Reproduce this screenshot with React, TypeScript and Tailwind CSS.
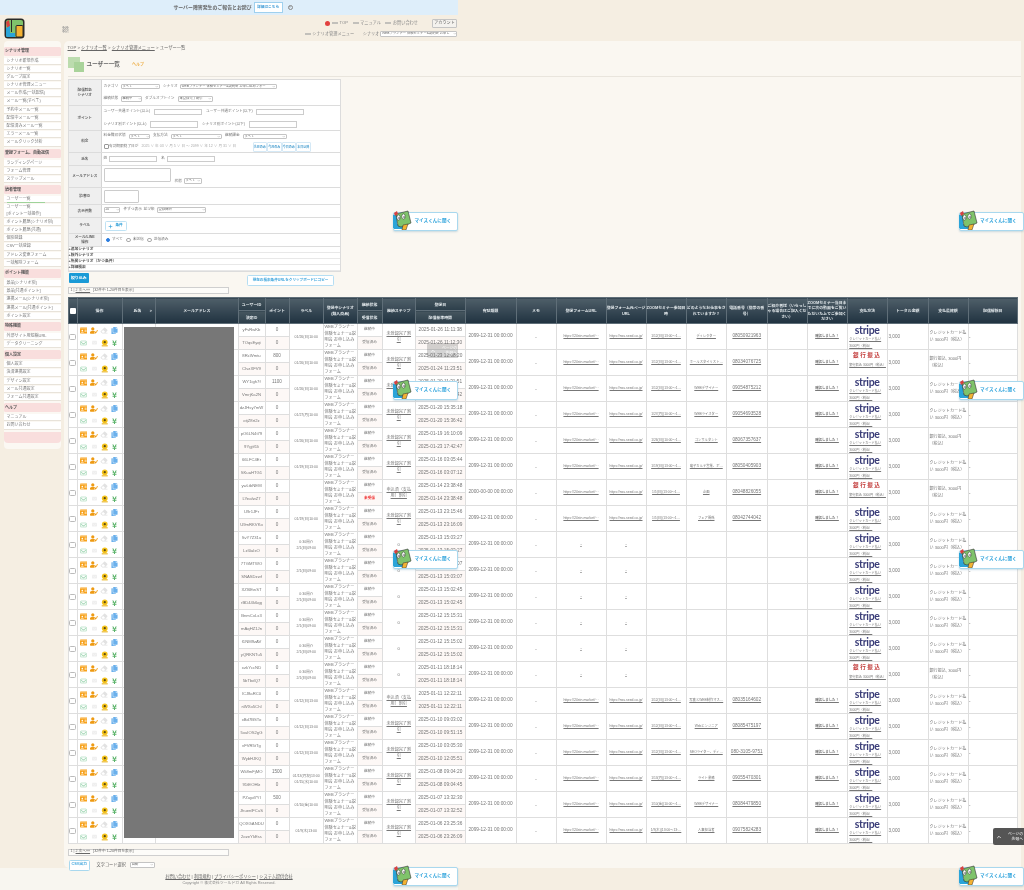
import { ReactNode } from "react";
import { FaCopy, FaEnvelope, FaEraser, FaIdCard, FaRegEnvelope, FaUserEdit, FaYenSign } from "react-icons/fa";
import { ChevronDown, ChevronUp, Plus, QrCode } from "lucide-react";

type Member = {
  uid: string;
  sid: string;
  p1: string;
  label: string[];
  step: string;
  d1: string;
  d2: string;
  job?: string;
  tel?: string;
  zoom?: string;
  bank?: boolean;
  payBank?: boolean;
  exp?: string;
  unread?: boolean;
};

const members: Member[] = [
  { uid: "yFvRwKb", sid: "TOqsEyqt", p1: "0", label: ["01/26(日)10:00"], step: "未登録完了割引", d1: "2025-01-26 11:11:38", d2: "2025-01-26 11:12:30", job: "ディレクター", tel: "08050921963", zoom: "1/12(日)(13:00〜1…" },
  { uid: "8RcWmtu", sid: "CIvzXFV9", p1: "800", label: ["01/26(日)10:00"], step: "未登録完了割引", d1: "2025-01-23 12:08:20", d2: "2025-01-24 11:23:51", job: "ホールスタイリスト…", tel: "08034076725", zoom: "1/12(日)(13:00〜1…", bank: true, payBank: true },
  { uid: "WY1igh7f", sid: "VmrjKa2N", p1: "1100", label: ["01/26(日)10:00"], step: "未登録完了割引", d1: "2025-01-20 11:31:51", d2: "2025-01-20 11:32:42", job: "WEBデザイナー", tel: "09054875212", zoom: "1/12(日)(13:00〜1…" },
  { uid: "dzJHsy7mW", sid: "otjZ8rt2z", p1: "0", label: ["01/27(月)10:00"], step: "未登録完了割引", d1: "2025-01-20 15:35:18", d2: "2025-01-20 15:36:42", job: "WEBライスター", tel: "09054693528", zoom: "1/27(月)(10:00〜1…" },
  { uid: "pO6LN4t79", sid: "9Ygjtf1li", p1: "0", label: ["01/26(日)10:00"], step: "未登録完了割引", d1: "2025-01-19 16:10:09", d2: "2025-01-23 17:42:47", job: "コンサルタント", tel: "08067357637", zoom: "1/26(日)(10:00〜1…", payBank: true },
  { uid: "66LFC4Er", sid: "SKuaHTG1", p1: "0", label: ["01/19(日)13:00"], step: "未登録完了割引", d1: "2025-01-16 03:05:44", d2: "2025-01-16 03:07:12", job: "電子カルテ営業、ボ…", tel: "08050405903", zoom: "1/19(日)(13:00〜1…" },
  { uid: "ywLtbNEM", sid: "LYeafwZ7", p1: "0", label: [], step: "申込済（支払用）割引", d1: "2025-01-14 23:38:48", d2: "2025-01-14 23:38:48", job: "企画", tel: "08048826055", zoom: "1/5(日)(13:00〜1…", bank: true, payBank: true, exp: "2000-00-00 00:00:00", unread: true },
  { uid: "U9r1JFr", sid: "U9mRKVKo", p1: "0", label: ["01/19(日)10:00"], step: "未登録完了割引", d1: "2025-01-13 23:15:46", d2: "2025-01-13 23:16:09", job: "フェア関係", tel: "08042744042", zoom: "1/5(日)(13:00〜1…" },
  { uid: "SvY7Z31u", sid: "LzI0aIxO", p1: "0", label: ["0:30開介", "2/1(日)09:00"], step: "0", d1: "2025-01-13 15:03:27", d2: "2025-01-13 15:03:27" },
  { uid: "7TGMTWO", sid: "SNASDzwf", p1: "0", label: ["2/1(日)09:00"], step: "0", d1: "2025-01-13 15:03:07", d2: "2025-01-13 15:03:07" },
  { uid: "XZI6EwST", sid: "rBD44k6qg", p1: "0", label: ["0:30開介", "2/1(日)09:00"], step: "0", d1: "2025-01-13 15:02:45", d2: "2025-01-13 15:02:45" },
  { uid: "BnmCxLx3", sid: "mAqHZ1Jn", p1: "0", label: ["0:30開介", "2/1(日)09:00"], step: "0", d1: "2025-01-12 15:15:31", d2: "2025-01-12 15:15:31" },
  { uid: "f1NM9zAV", sid: "yQRKNTu5", p1: "0", label: ["0:30開介", "2/1(日)09:00"], step: "0", d1: "2025-01-12 15:15:02", d2: "2025-01-12 15:15:02" },
  { uid: "xzkYccND", sid: "5bTbdQ7", p1: "0", label: ["0:30開介", "2/1(日)09:00"], step: "0", d1: "2025-01-11 18:18:14", d2: "2025-01-11 18:18:14", bank: true, payBank: true },
  { uid: "lCJ8aRC0", sid: "nWXo5ChI", p1: "0", label: ["01/12(日)13:00"], step: "申込済（支払用）割引", d1: "2025-01-11 12:22:11", d2: "2025-01-11 12:22:11", job: "写真とWEB制作マス…", tel: "08035164602", zoom: "1/12(日)(13:00〜1…" },
  { uid: "xBd7BSTo", sid: "5xuIOS2gG", p1: "0", label: ["01/12(日)13:00"], step: "未登録完了割引", d1: "2025-01-10 09:03:02", d2: "2025-01-10 09:51:15", job: "Webエンジニア", tel: "08085475197", zoom: "1/12(日)(13:00〜1…" },
  { uid: "vFVR5tTg", sid: "WybHJKQ", p1: "0", label: ["01/12(日)13:00"], step: "未登録完了割引", d1: "2025-01-10 03:05:30", d2: "2025-01-10 12:05:51", job: "SEOライター、ディ…", tel: "080-3105-9751", zoom: "1/12(日)(13:00〜1…" },
  { uid: "Wk8mFjMO", sid: "91tEOHlz", p1: "1500", label: ["01/13(月祝)13:00", "01/15(水)10:00"], step: "未登録完了割引", d1: "2025-01-08 09:04:20", d2: "2025-01-08 09:04:45", job: "ライト業務", tel: "09055470301", zoom: "1/13(月)(13:00〜1…" },
  { uid: "PZuyd7Yl", sid: "JhuenlFCuS", p1: "500", label: ["01/10(金)10:00"], step: "未登録完了割引", d1: "2025-01-07 13:32:30", d2: "2025-01-07 13:32:52", job: "WEBデザイナー", tel: "08084479850", zoom: "1/10(金)(10:00〜1…" },
  { uid: "QOXGANDU", sid: "2ozeYkEss", p1: "0", label: ["01/9(木)13:00"], step: "未登録完了割引", d1: "2025-01-06 23:25:36", d2: "2025-01-06 23:26:09", job: "人事担当者", tel: "09075824283", zoom: "1/9(木)(13:00〜13:…" },
];

const sideNav: { title: string; items: string[][] }[] = [
  { title: "シナリオ管理", items: [["シナリオ新規作成"], ["シナリオ一覧"], ["グループ設定"], ["シナリオ管理メニュー"], ["メール作成(一括配信)"], ["メール一覧(すべて)"], ["予約中メール一覧"], ["配信中メール一覧"], ["配信済みメール一覧"], ["エラーメール一覧"], ["メールクリック分析"]] },
  { title: "登録フォーム、自動返信", items: [["ランディングページ"], ["フォーム管理"], ["ステップメール"]] },
  { title: "読者管理", items: [["ユーザー一覧"], ["ユーザー一覧", "[ポイント一括操作]"], ["ポイント履歴(シナリオ別)"], ["ポイント履歴(共通)"], ["個別登録"], ["CSV一括登録"], ["アドレス変更フォーム"], ["一括解除フォーム"]] },
  { title: "ポイント機能", items: [["景品[シナリオ別]"], ["景品[共通ポイント]"], ["連携メール[シナリオ別]"], ["連携メール[共通ポイント]"], ["ポイント設定"]] },
  { title: "特殊機能", items: [["外部サイト用短縮URL"], ["データクリーニング"]] },
  { title: "個人設定", items: [["個人設定"], ["決済連携設定"], ["デザイン設定"], ["メール共通設定"], ["フォーム共通設定"]] },
  { title: "ヘルプ", items: [["マニュアル"], ["お問い合わせ"]] },
];

const Sel = ({ className, children }: { className: string; children?: ReactNode }) => (
  <div className={`flex h-[5.5px] items-center justify-between overflow-hidden rounded-[1px] border border-[#c4c4c4] bg-white pl-[1px] text-[3.3px] leading-none text-[#666] ${className}`}>
    <span className="whitespace-nowrap">{children}</span>
    <ChevronDown className="h-[3.5px] w-[3.5px] shrink-0 text-[#777]" strokeWidth={2} />
  </div>
);

const Inp = ({ className }: { className: string }) => (
  <div className={`border border-[#cccccc] bg-white ${className}`} />
);

const FormRow = ({ label, className, children }: { label: ReactNode; className: string; children: ReactNode }) => (
  <div className={`flex border-b border-[#dcdcdc] ${className}`}>
    <div className="flex w-[33.5px] shrink-0 items-center justify-center border-r border-[#d4d4d4] bg-[#efefef] text-center text-[3.6px] font-bold leading-[5px] text-[#666]">
      {label}
    </div>
    <div className="min-w-0 flex-1 whitespace-nowrap bg-white pl-[1.5px]">{children}</div>
  </div>
);

const DayBtn = ({ children }: { children: string }) => (
  <div className="flex h-[10px] w-[14.5px] items-center justify-center whitespace-nowrap rounded-[1px] border border-[#d5e9f6] bg-white text-[3px] font-bold text-[#4a9fd0]">
    {children}
  </div>
);

const Radio = ({ on, children }: { on?: boolean; children: string }) => (
  <div className="flex items-center gap-[2px] text-[3.7px]">
    <span className={`h-[4.5px] w-[4.5px] rounded-full ${on ? "border border-[#2b7de0] bg-[#2b7de0]" : "border border-[#aaa] bg-white"}`} />
    {children}
  </div>
);

const Mascot = ({ className }: { className: string }) => (
  <div className={`absolute flex h-[18.5px] w-[65px] items-center rounded-[2px] border border-[#a9d8ee] bg-white shadow-[0_1px_2px_rgba(90,150,180,.3)] ${className}`}>
    <svg viewBox="0 0 20 20" className="-mt-[2px] -ml-[1px] h-[20px] w-[20px] shrink-0">
      <path d="M0 5 L4 4 L4 19 L0 18 Z" fill="#2aa4d8" />
      <path d="M1 19 L1 14 L14 14 L13 19 Z" fill="#2aa4d8" />
      <path d="M3 4 L15 1 L18 13 L11 16 L8 17 L5 16 Z" fill="#7fc36b" stroke="#333" strokeWidth="0.6" />
      <path d="M10 15 L15 14 L13 20 L9 20 Z" fill="#f4b233" stroke="#333" strokeWidth="0.5" />
      <path d="M1 3 L4 1 L5 4 L2 6 Z" fill="#d9403f" />
      <ellipse cx="5.5" cy="7.5" rx="1.7" ry="2.6" fill="#fff" stroke="#333" strokeWidth="0.5" />
      <ellipse cx="10.5" cy="6.5" rx="1.7" ry="2.6" fill="#fff" stroke="#333" strokeWidth="0.5" />
      <circle cx="6" cy="8" r="0.7" fill="#222" />
      <circle cx="11" cy="7" r="0.7" fill="#222" />
    </svg>
    <span className="ml-[1.5px] whitespace-nowrap text-[4.6px] font-bold text-[#2ea3dc]">マイスくんに聞く</span>
  </div>
);

const Pager = () => (
  <div className="flex h-[6.8px] w-[161px] items-center border border-[#cfcfcf] bg-[#fdfcf9] pl-[2px] text-[3.7px] text-[#666]">
    1 | <span className="ml-[1px] underline">2 次へ»»</span>
    <span className="ml-[3px]">[32件中 1-20件目を表示]</span>
  </div>
);

const Sidebar = () => (
  <aside className="ml-[3.5px] h-[408px] w-[57.5px] shrink-0 rounded-[4px] bg-[#fbf8f3] pt-[5.5px] text-[4px] text-[#777]">
    {sideNav.map((section) => (
      <div key={section.title} className="mb-[2px]">
        <div className="mb-[2px] flex h-[9px] items-center rounded-[1.5px] bg-[#f9dedd] pl-[1.5px] text-[4px] font-bold text-[#555]">
          {section.title}
        </div>
        {section.items.map((item, i) => {
          const active = section.title === "読者管理" && i === 0;
          return (
            <div
              key={item.join("")}
              className={`mb-[1px] whitespace-nowrap border-b border-[#e8e3da] bg-white pl-[3px] leading-[6.2px] ${item.length > 1 ? "h-[13.5px]" : "h-[7.2px]"}`}
            >
              {item.map((t) => (
                <div key={t} className={active ? "w-[38px] border-b border-[#9ed39a]" : ""}>{t}</div>
              ))}
            </div>
          );
        })}
      </div>
    ))}
    <div className="mt-[2px] h-[11px] rounded-b-[4px] bg-[#f9dedd]" />
  </aside>
);

const SearchForm = () => (
  <div className="mt-[2px] w-[273.5px] border border-[#dcdcdc] text-[3.7px] text-[#777]">
    <FormRow label={<>配信対象<br />シナリオ</>} className="h-[26px]">
      <div className="flex h-[13px] items-center">
        <span className="w-[17px]">カテゴリ</span>
        <Sel className="w-[39px]">すべて</Sel>
        <span className="ml-[3.5px] w-[16.5px]">シナリオ</span>
        <Sel className="w-[97px]">WEBプランナー 体験セミナー&amp;説明会 お申し込みフォー</Sel>
      </div>
      <div className="flex h-[12px] items-center">
        <span className="w-[17px]">継続状態</span>
        <Sel className="w-[21.5px]">継続中</Sel>
        <span className="ml-[3px] w-[32.5px]">ダブルオプトイン</span>
        <Sel className="w-[35px]">未登録完了割引</Sel>
      </div>
    </FormRow>
    <FormRow label="ポイント" className="h-[25px]">
      <div className="flex h-[12.5px] items-center">
        <span className="w-[50.5px]">ユーザー共通ポイント(以上)</span>
        <Inp className="h-[6px] w-[48px]" />
        <span className="ml-[4px] w-[50px]">ユーザー共通ポイント(以下)</span>
        <Inp className="h-[6px] w-[48px]" />
      </div>
      <div className="flex h-[12px] items-center">
        <span className="w-[46.5px]">シナリオ別ポイント(以上)</span>
        <Inp className="h-[6.5px] w-[48px]" />
        <span className="ml-[4px] w-[46.5px]">シナリオ別ポイント(以下)</span>
        <Inp className="h-[6.5px] w-[48px]" />
      </div>
    </FormRow>
    <FormRow label="料金" className="h-[22px]">
      <div className="flex h-[10.5px] items-center">
        <span className="w-[25px]">料金徴収状態</span>
        <Sel className="w-[21.5px]">すべて</Sel>
        <span className="ml-[3px] w-[17.5px]">支払方法</span>
        <Sel className="w-[51px]">すべて</Sel>
        <span className="ml-[3.5px] w-[17.5px]">継続課金</span>
        <Sel className="w-[44px]">すべて</Sel>
      </div>
      <div className="flex h-[10.5px] items-center">
        <span className="h-[5px] w-[5px] rounded-[1px] border border-[#999] bg-white" />
        <span className="ml-[0.5px] w-[32.5px]">有効期限終了日が</span>
        <span className="w-[111px] text-[3.6px] text-[#aaa]">2025 ∨ 年 03 ∨ 月 5 ∨ 日 ～ 2099 ∨ 年 12 ∨ 月 31 ∨ 日</span>
        <DayBtn>先月のみ</DayBtn>
        <DayBtn>今月のみ</DayBtn>
        <DayBtn>今日のみ</DayBtn>
        <DayBtn>本日以降</DayBtn>
      </div>
    </FormRow>
    <FormRow label="氏名" className="h-[13px]">
      <div className="flex h-full items-center">
        <span className="w-[5.5px]">姓</span>
        <Inp className="h-[6.5px] w-[48px]" />
        <span className="ml-[4px] w-[5.5px]">名</span>
        <Inp className="h-[6.5px] w-[48px]" />
      </div>
    </FormRow>
    <FormRow label="メールアドレス" className="h-[22px]">
      <div className="flex h-full items-start pt-[2px]">
        <Inp className="h-[13.5px] w-[67.5px] rounded-[1px]" />
        <span className="ml-[3.5px] mt-[11px] w-[9px]">状態</span>
        <Sel className="mt-[10px] w-[18px]">すべて</Sel>
      </div>
    </FormRow>
    <FormRow label="読者ID" className="h-[17px]">
      <div className="pt-[2px]">
        <Inp className="h-[13px] w-[35px] rounded-[1px]" />
      </div>
    </FormRow>
    <FormRow label="表示件数" className="h-[13px]">
      <div className="flex items-center pt-[2px]">
        <Sel className="w-[16.5px]">20</Sel>
        <span className="ml-[3.5px] w-[20px]">件ずつ表示</span>
        <span className="w-[13px]">並び順</span>
        <Sel className="w-[49.5px]">登録降順</Sel>
      </div>
    </FormRow>
    <FormRow label="ラベル" className="h-[16px]">
      <div className="pl-[1px] pt-[3px]">
        <div className="flex h-[10px] w-[22px] items-center justify-center gap-[2px] rounded-[1.5px] border border-[#bfe2f4] bg-white text-[3.6px] font-bold text-[#2f9fd8]">
          <Plus className="h-[5px] w-[5px]" strokeWidth={3} />
          条件
        </div>
      </div>
    </FormRow>
    <FormRow label={<>メール/LINE<br />操作</>} className="h-[13px]">
      <div className="flex h-full items-center gap-[3.5px] pl-[2px]">
        <Radio on>すべて</Radio>
        <Radio>未送信</Radio>
        <Radio>送信済み</Radio>
      </div>
    </FormRow>
    {["+追加シナリオ", "+除外シナリオ", "+所属シナリオ（かつ条件）", "+詳細検索"].map((t) => (
      <div key={t} className="flex h-[6px] items-center border-b border-[#e8e8e8] bg-white text-[3.8px] font-bold leading-none text-[#555]">
        {t}
      </div>
    ))}
  </div>
);

const Th = ({ children, rowSpan = 2, sub }: { children?: ReactNode; rowSpan?: number; sub?: boolean }) => (
  <th
    rowSpan={rowSpan}
    className={`border border-[#5f6e78] p-0 text-center text-[3.9px] font-bold leading-[5.4px] text-[#e3e9ec] ${sub ? "bg-gradient-to-b from-[#46565f] to-[#2c3e4a]" : "bg-gradient-to-b from-[#4f5f69] to-[#203240]"}`}
  >
    {children}
  </th>
);

const ActionIcons = () => (
  <div className="grid h-[25px] grid-cols-4 items-center justify-items-center pl-[1px] pr-[1.5px]">
    <FaIdCard className="h-[7px] w-[7.5px] text-[#f7a21c]" />
    <FaUserEdit className="h-[7px] w-[8px] text-[#ee9a12]" />
    <FaEraser className="h-[7px] w-[8px] text-[#e2e2e2]" />
    <FaCopy className="h-[7px] w-[7px] text-[#6ab0ec]" />
    <FaRegEnvelope className="h-[6px] w-[7px] text-[#8fcfa6]" />
    <FaEnvelope className="h-[5px] w-[7px] text-[#efefef]" />
    <svg viewBox="0 0 10 10" className="h-[7.5px] w-[7.5px]">
      <circle cx="5" cy="4.3" r="3.8" fill="#f4c21a" />
      <circle cx="5" cy="4.3" r="1.5" fill="#5b4a10" />
      <rect x="1" y="8.4" width="8" height="1.4" fill="#e8b010" />
    </svg>
    <FaYenSign className="h-[6.5px] w-[5px] text-[#5bb36a]" />
  </div>
);

const Cell = ({ rowSpan = 2, className = "", children }: { rowSpan?: number; className?: string; children?: ReactNode }) => (
  <td rowSpan={rowSpan} className={`overflow-hidden border border-[#dedede] p-0 text-center ${className}`}>
    {children}
  </td>
);

const MemberRows = ({ m }: { m: Member }) => {
  const hasForm = !!m.tel;
  return (
    <>
      <tr className="h-[12.85px]">
        <Cell>
          <span className="mx-auto block h-[6.5px] w-[6.5px] rounded-[1.5px] border border-[#bbb] bg-white" />
        </Cell>
        <Cell><ActionIcons /></Cell>
        <Cell />
        <Cell />
        <Cell rowSpan={1} className="text-[4.2px]">{m.uid}</Cell>
        <Cell rowSpan={1} className="text-[4.6px]">{m.p1}</Cell>
        <Cell className="text-[3.5px] leading-[6px]">
          {m.label.map((l) => (
            <div key={l}>{l}</div>
          ))}
        </Cell>
        <Cell className="text-left text-[4.1px] leading-[6.2px]">
          <div className="h-[24.8px] overflow-hidden pl-[0.5px]">WEBプランナー体験セミナー&amp;説明会 お申し込みフォーム</div>
        </Cell>
        <Cell rowSpan={1} className="text-[3.7px]">継続中</Cell>
        <Cell className="text-[4.1px] leading-[6.2px]">
          {m.step === "0" ? "0" : <span className="mx-auto block w-[27px] underline">{m.step}</span>}
        </Cell>
        <Cell rowSpan={1} className="whitespace-nowrap text-[4.75px]">{m.d1}</Cell>
        <Cell className="whitespace-nowrap text-[4.75px]">{m.exp ?? "2099-12-31 00:00:00"}</Cell>
        <Cell>-</Cell>
        <Cell className="text-[3.5px] underline">{hasForm ? <div className="whitespace-nowrap">https://24stn.market/···</div> : "-"}</Cell>
        <Cell className="text-[3.4px] underline">{hasForm ? <div className="whitespace-nowrap">https://nsu.seed.co.jp/</div> : "-"}</Cell>
        <Cell className="text-[3.3px] underline">{m.zoom && <div className="whitespace-nowrap">{m.zoom}</div>}</Cell>
        <Cell className="text-[3.3px] underline">{m.job && <div className="whitespace-nowrap">{m.job}</div>}</Cell>
        <Cell className="text-[4.7px] underline">{m.tel}</Cell>
        <Cell />
        <Cell className="text-[3.4px] font-bold underline">{hasForm && "確認しました！"}</Cell>
        <Cell>
          <div className="flex h-[25px] flex-col items-center overflow-hidden">
            {m.bank ? (
              <div className="mt-[1px] h-[10.5px] whitespace-nowrap text-[5.6px] font-bold leading-[9px] tracking-[1.5px] text-[#c4403f]">銀行振込</div>
            ) : (
              <div className="mt-[1px] h-[11px] font-['Lato',sans-serif] text-[10.5px] font-bold leading-[10px] tracking-[-0.3px] text-[#3a3d78]">stripe</div>
            )}
            <div className="w-[36px] text-left text-[3.2px] leading-[6.2px] underline">
              {m.bank ? <span className="whitespace-nowrap">銀行振込 3000円（税込）</span> : <>クレジットカード払い<br />3000円（税込）</>}
            </div>
          </div>
        </Cell>
        <Cell className="pl-[0.5px] text-left text-[4.6px]">3,000</Cell>
        <Cell className="text-left text-[4.1px] leading-[6.4px]">
          <div className="pl-[1px]">{m.payBank ? "銀行振込, 3000円（税込）" : "クレジットカード払い 3000円（税込）"}</div>
        </Cell>
        <Cell className="pl-[0.5px] text-left">-</Cell>
      </tr>
      <tr className="h-[12.85px] bg-[#fdf8f6]">
        <Cell rowSpan={1} className="bg-[#fdf8f6] text-[4.2px]">{m.sid}</Cell>
        <Cell rowSpan={1} className="bg-[#fdf8f6] text-[4.6px]">0</Cell>
        <Cell rowSpan={1} className={`bg-[#fdf8f6] text-[3.7px] ${m.unread ? "font-bold text-[#f03a3a]" : ""}`}>
          {m.unread ? "未受信" : "受信済み"}
        </Cell>
        <Cell rowSpan={1} className="whitespace-nowrap bg-[#fdf8f6] text-[4.75px]">{m.d2}</Cell>
      </tr>
    </>
  );
};

const UsersTable = () => (
  <div className="relative mt-[3.5px]">
    <table className="w-[949.5px] table-fixed border-collapse bg-white text-[4.4px] leading-none text-[#777]">
      <colgroup>
        {[9, 45, 33.5, 82.5, 27, 24, 34.5, 33.5, 25, 33.5, 49.5, 51, 40, 50, 40, 40, 40.5, 40.5, 40, 40, 40.5, 40.5, 40, 49.5].map((w, i) => (
          <col key={i} style={{ width: w }} />
        ))}
      </colgroup>
      <thead>
        <tr className="h-[13px]">
          <Th><span className="mx-auto block h-[6px] w-[6px] rounded-[1px] bg-white" /></Th>
          <Th>操作</Th>
          <Th>
            <div className="flex justify-between px-[3px]">
              <span className="ml-[8px]">氏名</span>
              <span>&gt;</span>
            </div>
          </Th>
          <Th>メールアドレス</Th>
          <Th rowSpan={1} sub>ユーザーID</Th>
          <Th>ポイント</Th>
          <Th>ラベル</Th>
          <Th>登録中シナリオ<br />(購入商品)</Th>
          <Th rowSpan={1} sub>継続状態</Th>
          <Th>継続ステップ</Th>
          <Th rowSpan={1} sub>登録日</Th>
          <Th>有効期限</Th>
          <Th>メモ</Th>
          <Th>登録フォームURL</Th>
          <Th>登録フォーム元ページURL</Th>
          <Th>ZOOMセミナー参加日時</Th>
          <Th>どのようなお仕事をされていますか？</Th>
          <Th>電話番号（携帯の番号）</Th>
          <Th>ご紹介者様（いらっしゃる場合はご記入ください）</Th>
          <Th>ZOOMセミナー当日までに次の動画をご覧いただいた上でご参加ください</Th>
          <Th>支払方法</Th>
          <Th>トータル金額</Th>
          <Th>支払最終額</Th>
          <Th>配信解除日</Th>
        </tr>
        <tr className="h-[13px]">
          <Th rowSpan={1} sub>決定ID</Th>
          <Th rowSpan={1} sub>受信状態</Th>
          <Th rowSpan={1} sub>配信基準時間</Th>
        </tr>
      </thead>
      <tbody>
        {members.map((m) => (
          <MemberRows key={m.uid} m={m} />
        ))}
      </tbody>
    </table>
    {/* 個人情報はグレーで隠されている */}
    <div className="absolute left-[56.5px] top-[29.5px] h-[511px] w-[110px] bg-[#777]" />
  </div>
);

const HeadLink = ({ children }: { children: string }) => (
  <span className="flex items-center">
    <span className="mr-[1.5px] h-[2.5px] w-[6px] bg-[#c2c0bb]" />
    {children}
  </span>
);

export default function App() {
  return (
    <div className="relative h-[890px] w-[1024px] overflow-hidden bg-[#f5eee2] font-['Liberation_Sans','Noto_Sans_CJK_JP',sans-serif] text-[#666] blur-[0.3px]">
      <div className="flex h-[15px] w-[458px] items-center justify-center bg-[#deeefa]">
        <span className="ml-[8px] text-[4.9px] font-bold text-[#666]">サーバー障害発生のご報告とお詫び</span>
        <div className="ml-[2px] flex h-[11px] w-[29px] items-center justify-center border border-[#9fd0ee] bg-white text-[3.7px] font-bold text-[#3f9bd6]">詳細はこちら</div>
        <span className="ml-[5px] flex h-[5px] w-[5px] items-center justify-center rounded-full border border-[#888] text-[3.5px] leading-none">×</span>
      </div>

      <header className="relative flex h-[26px] w-[458px]">
        <svg viewBox="0 0 21 21" className="ml-[4px] mt-[3px] h-[21px] w-[21px]">
          <rect x="0.5" y="0.5" width="20" height="20" rx="3.5" fill="#2a2a28" />
          <rect x="2" y="2" width="17" height="17" rx="2" fill="#7fc36b" />
          <path d="M2 4 L5 2 L6 8 L3 10 Z" fill="#d9403f" />
          <path d="M2 10 L6 8 L6 15 L11 15 L11 19 L3.5 19 Q2 19 2 17.5 Z" fill="#2aa4d8" />
          <rect x="12" y="7.5" width="7" height="11.5" rx="1" fill="#f4b233" stroke="#2a2a28" />
          <path d="M7 2 L8 2 L8 14 L7 14 Z" fill="#2a2a28" />
        </svg>
        <QrCode className="ml-[37px] mt-[11px] h-[7px] w-[7px] text-[#999]" strokeWidth={2.4} />
        <div className="ml-auto flex flex-col items-end pr-[1px] text-[4.2px] text-[#8a8a8a]">
          <div className="flex items-center gap-[4.5px] pt-[3.5px]">
            <span className="-mr-[2.5px] h-[5px] w-[5px] rounded-full bg-[#e2403f]" />
            <HeadLink>TOP</HeadLink>
            <HeadLink>マニュアル</HeadLink>
            <HeadLink>お問い合わせ</HeadLink>
            <div className="ml-[9.5px] flex h-[9px] w-[25px] items-center justify-center rounded-[1px] border border-[#c4c4c4] bg-[#f4f2ee] text-[4.1px] text-[#666]">アカウント</div>
          </div>
          <div className="mt-[3.5px] flex items-center">
            <HeadLink>シナリオ管理メニュー</HeadLink>
            <span className="ml-[8.5px] mr-[0.5px]">シナリオ</span>
            <Sel className="w-[77px]">WEBプランナー 体験セミナー&amp;説明会 お申し</Sel>
          </div>
        </div>
      </header>

      <div className="flex h-[827px]">
        <Sidebar />
        <main className="ml-[3px] mr-[3px] flex-1 rounded-l-[5px] bg-[#faf7f1] pl-[3.5px]">
          <div className="h-[9px] pt-[3.5px] text-[4.3px] leading-[6px]">
            <span className="underline">TOP</span> &gt; <span className="underline">シナリオ一覧</span> &gt; <span className="underline">シナリオ管理メニュー</span> &gt; ユーザー一覧
          </div>
          <div className="mt-[7px] flex h-[15px] items-center">
            <div className="relative h-[15px] w-[16px]">
              <div className="h-[10.5px] w-[12.5px] bg-[#bcdcae]" />
              <div className="absolute bottom-0 right-0 h-[10px] w-[10px] bg-[#a9d39a]" />
            </div>
            <h1 className="ml-[3px] text-[5.6px] font-bold text-[#666]">ユーザー一覧</h1>
            <span className="ml-[12px] text-[4px] font-bold text-[#eeb04a]">ヘルプ</span>
          </div>
          <div className="mt-[4px] border-b border-[#e9e5dd]" />
          <SearchForm />
          <div className="flex h-[15px] w-[273.5px] items-start justify-between pt-[1px]">
            <div className="ml-[1px] flex h-[10px] w-[20.5px] items-center justify-center rounded-[1px] bg-[#1a9ad6] text-[3.9px] font-bold text-white">絞り込み</div>
            <div className="mr-[7px] mt-[2px] flex h-[11px] w-[87px] items-center justify-center whitespace-nowrap rounded-[1.5px] border border-[#b5def3] bg-white text-[3.6px] font-bold text-[#3fa5dc]">現在の検索条件URLをクリップボードにコピー</div>
          </div>
          <Pager />
          <UsersTable />
          <div className="mt-[4.5px]">
            <Pager />
          </div>
          <div className="mt-[4px] flex items-center">
            <div className="ml-[1px] flex h-[11px] w-[21.5px] items-center justify-center rounded-[1.5px] border border-[#a9d8ee] bg-white text-[3.8px] font-bold text-[#3fa5dc]">CSV出力</div>
            <span className="ml-[6.5px] text-[4.2px]">文字コード選択</span>
            <Sel className="ml-[4px] w-[25px]">自動</Sel>
          </div>
        </main>
      </div>

      <footer className="flex h-[22px] w-[458px] flex-col items-center bg-[#f8f6f0] pt-[6px] text-[4.2px] leading-[6px]">
        <div>
          <span className="underline">お問い合わせ</span> | <span className="underline">利用規約</span> | <span className="underline">プライバシーポリシー</span> | <span className="underline">システム提供会社</span>
        </div>
        <div className="text-[3.9px] text-[#888]">Copyright © 株式会社ツールドガ All Rights Reserved.</div>
      </footer>

      <Mascot className="left-[393px] top-[212px]" />
      <Mascot className="left-[958.5px] top-[212px]" />
      <Mascot className="left-[393px] top-[381px]" />
      <Mascot className="left-[958.5px] top-[381px]" />
      <Mascot className="left-[393px] top-[550px]" />
      <Mascot className="left-[958.5px] top-[550px]" />
      <Mascot className="left-[393px] top-[867px]" />
      <Mascot className="left-[958.5px] top-[867px]" />

      <div className="absolute left-[427px] top-[343px] flex h-[15px] w-[31px] items-center rounded-l-[2px] bg-[#555]/25 pl-[2px] text-[3.8px] leading-[5px] text-white">
        <ChevronUp className="h-[6px] w-[8px]" strokeWidth={3} />
        <span className="ml-auto pr-[1px] text-right">ページの<br />先頭へ</span>
      </div>
      <div className="absolute left-[993px] top-[828px] flex h-[17px] w-[31px] items-center rounded-l-[2px] bg-[#555] pl-[2px] text-[3.8px] leading-[5px] text-white">
        <ChevronUp className="h-[6px] w-[8px]" strokeWidth={3} />
        <span className="ml-auto pr-[1px] text-right">ページの<br />先頭へ</span>
      </div>
    </div>
  );
}
